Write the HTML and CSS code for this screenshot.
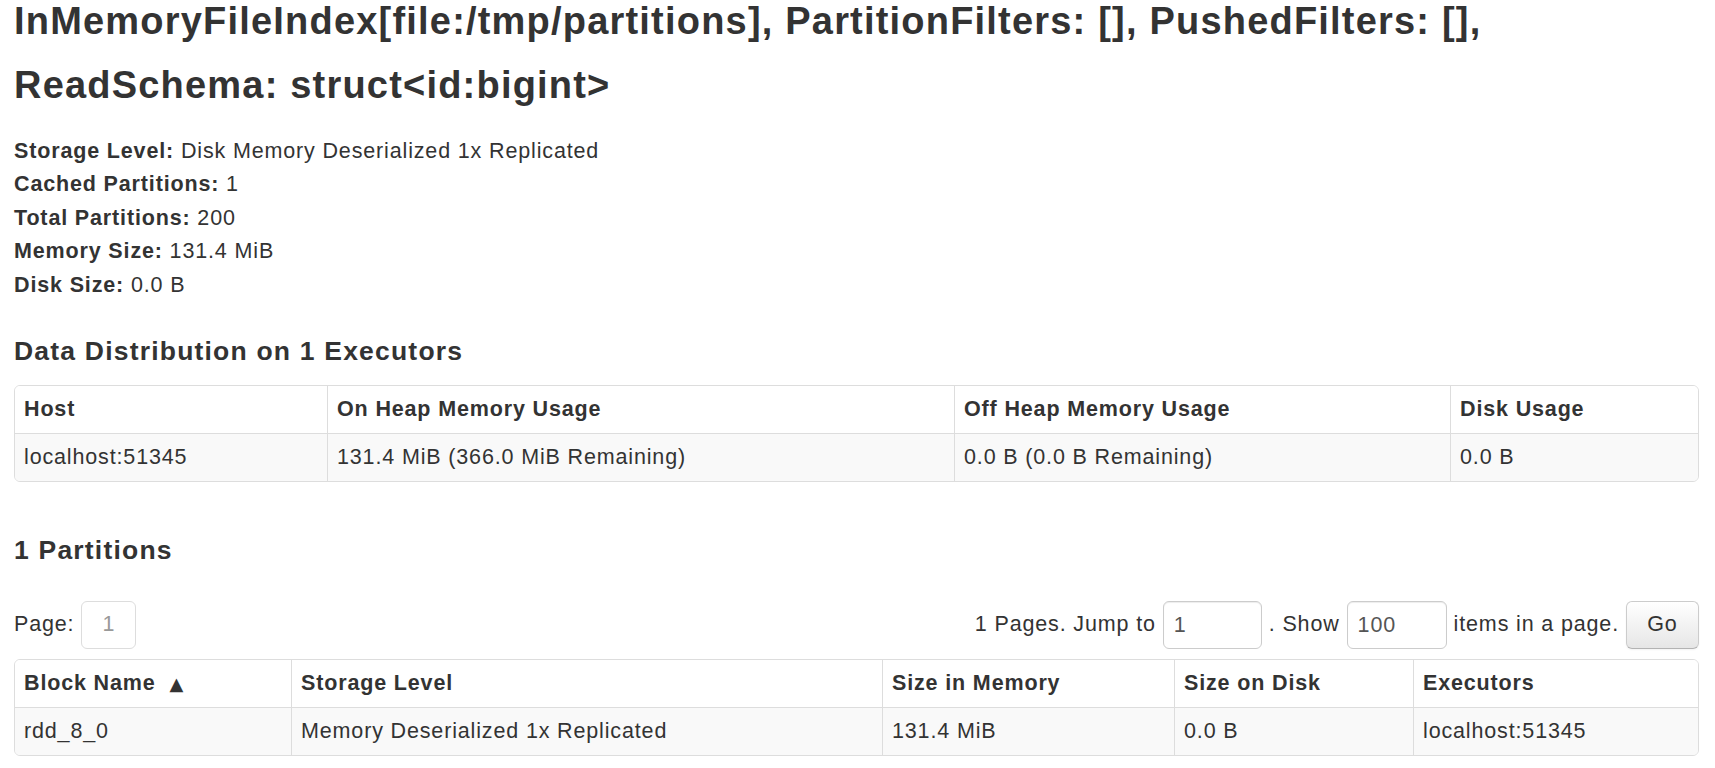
FILE: index.html
```html
<!DOCTYPE html>
<html lang="en">
<head>
<meta charset="utf-8">
<title>RDD Storage Info</title>
<link rel="stylesheet" href="styles.css">
</head>
<body>
<div class="container">
  <h3 class="title">InMemoryFileIndex[file:/tmp/partitions], PartitionFilters: [], PushedFilters: [], ReadSchema: struct&lt;id:bigint&gt;</h3>

  <ul class="summary">
    <li><strong>Storage Level:</strong> Disk Memory Deserialized 1x Replicated</li>
    <li><strong>Cached Partitions:</strong> 1</li>
    <li><strong>Total Partitions:</strong> 200</li>
    <li><strong>Memory Size:</strong> 131.4 MiB</li>
    <li><strong>Disk Size:</strong> 0.0 B</li>
  </ul>

  <h4 class="section">Data Distribution on 1 Executors</h4>
  <table class="grid">
    <thead>
      <tr>
        <th class="d-host">Host</th>
        <th class="d-on">On Heap Memory Usage</th>
        <th class="d-off">Off Heap Memory Usage</th>
        <th class="d-disk">Disk Usage</th>
      </tr>
    </thead>
    <tbody>
      <tr>
        <td>localhost:51345</td>
        <td>131.4 MiB (366.0 MiB Remaining)</td>
        <td>0.0 B (0.0 B Remaining)</td>
        <td>0.0 B</td>
      </tr>
    </tbody>
  </table>

  <h4 class="section">1 Partitions</h4>
  <div class="paging">
    <div class="page-left">
      <span>Page:</span>
      <span class="page-box">1</span>
    </div>
    <form class="page-form">
      <label>1 Pages. Jump to</label>
      <input class="field field-page" type="text" value="1">
      <label>. Show</label>
      <input class="field field-size" type="text" value="100">
      <label>items in a page.</label>
      <button class="go" type="button">Go</button>
    </form>
  </div>

  <table class="grid grid-blocks">
    <thead>
      <tr>
        <th class="b-name">Block Name<span class="sort">▲</span></th>
        <th class="b-level">Storage Level</th>
        <th class="b-mem">Size in Memory</th>
        <th class="b-disk">Size on Disk</th>
        <th class="b-exec">Executors</th>
      </tr>
    </thead>
    <tbody>
      <tr>
        <td>rdd_8_0</td>
        <td>Memory Deserialized 1x Replicated</td>
        <td>131.4 MiB</td>
        <td>0.0 B</td>
        <td>localhost:51345</td>
      </tr>
    </tbody>
  </table>
</div>
</body>
</html>
```

FILE: styles.css
```css
* {
  box-sizing: border-box;
}

html,
body {
  margin: 0;
  padding: 0;
  background: #ffffff;
}

body {
  font-family: "Liberation Sans", Arial, Helvetica, sans-serif;
  color: #333333;
  font-size: 21.5px;
  line-height: 33.4px;
  letter-spacing: 0.85px;
}

.container {
  padding: 0 16px 0 14px;
}

.title {
  margin: -11px 0 0;
  font-size: 38px;
  line-height: 64px;
  letter-spacing: 1.2px;
  font-weight: bold;
}

.summary {
  list-style: none;
  margin: 18px 0 0;
  padding: 0;
}

.summary strong {
  font-weight: bold;
}

.section {
  margin: 33px 0 18px;
  font-size: 26.5px;
  line-height: 32px;
  letter-spacing: 1.2px;
  font-weight: bold;
}

.grid {
  width: 100%;
  table-layout: fixed;
  border-collapse: separate;
  border-spacing: 0;
  border: 1px solid #dddddd;
  border-radius: 6px;
  margin: 0 0 52px;
}

.grid th,
.grid td {
  padding: 10px 9px;
  line-height: 27px;
  text-align: left;
  vertical-align: top;
  white-space: nowrap;
}

.grid th {
  font-weight: bold;
  background: #ffffff;
}

.grid th:first-child {
  border-top-left-radius: 5px;
}

.grid th:last-child {
  border-top-right-radius: 5px;
}

.grid th + th,
.grid td + td {
  border-left: 1px solid #dddddd;
}

.grid td {
  border-top: 1px solid #dddddd;
  background: #f9f9f9;
}

.grid td:first-child {
  border-bottom-left-radius: 5px;
}

.grid td:last-child {
  border-bottom-right-radius: 5px;
}

.d-host { width: 312px; }
.d-on { width: 627px; }
.d-off { width: 496px; }
.d-disk { width: 248px; }

.b-name { width: 276px; }
.b-level { width: 591px; }
.b-mem { width: 292px; }
.b-disk { width: 239px; }
.b-exec { width: 285px; }

.sort {
  font-family: "DejaVu Sans", sans-serif;
  font-size: 18px;
  letter-spacing: 0;
  margin-left: 14px;
}

.paging {
  display: flex;
  justify-content: space-between;
  align-items: center;
  padding-top: 17px;
}

.page-left {
  display: flex;
  align-items: center;
  gap: 7px;
}

.page-box {
  display: flex;
  align-items: center;
  justify-content: center;
  width: 55px;
  height: 48px;
  border: 1px solid #dddddd;
  border-radius: 6px;
  color: #999999;
}

.page-form {
  display: flex;
  align-items: center;
  gap: 7px;
  margin: 0;
}

.field {
  height: 48px;
  padding: 0 10px;
  border: 1px solid #cccccc;
  border-radius: 6px;
  box-shadow: inset 0 1px 1px rgba(0, 0, 0, 0.075);
  font: inherit;
  letter-spacing: inherit;
  color: #555555;
  background: #ffffff;
}

.field-page {
  width: 99px;
}

.field-size {
  width: 100px;
}

.go {
  width: 73px;
  height: 48px;
  padding: 0;
  border: 1px solid #cccccc;
  border-bottom-color: #b3b3b3;
  border-radius: 6px;
  background: linear-gradient(#ffffff, #e6e6e6);
  box-shadow: inset 0 1px 0 rgba(255, 255, 255, 0.2), 0 1px 2px rgba(0, 0, 0, 0.05);
  font: inherit;
  letter-spacing: inherit;
  color: #333333;
}

.grid-blocks {
  margin-top: 10px;
  margin-bottom: 0;
}
```
